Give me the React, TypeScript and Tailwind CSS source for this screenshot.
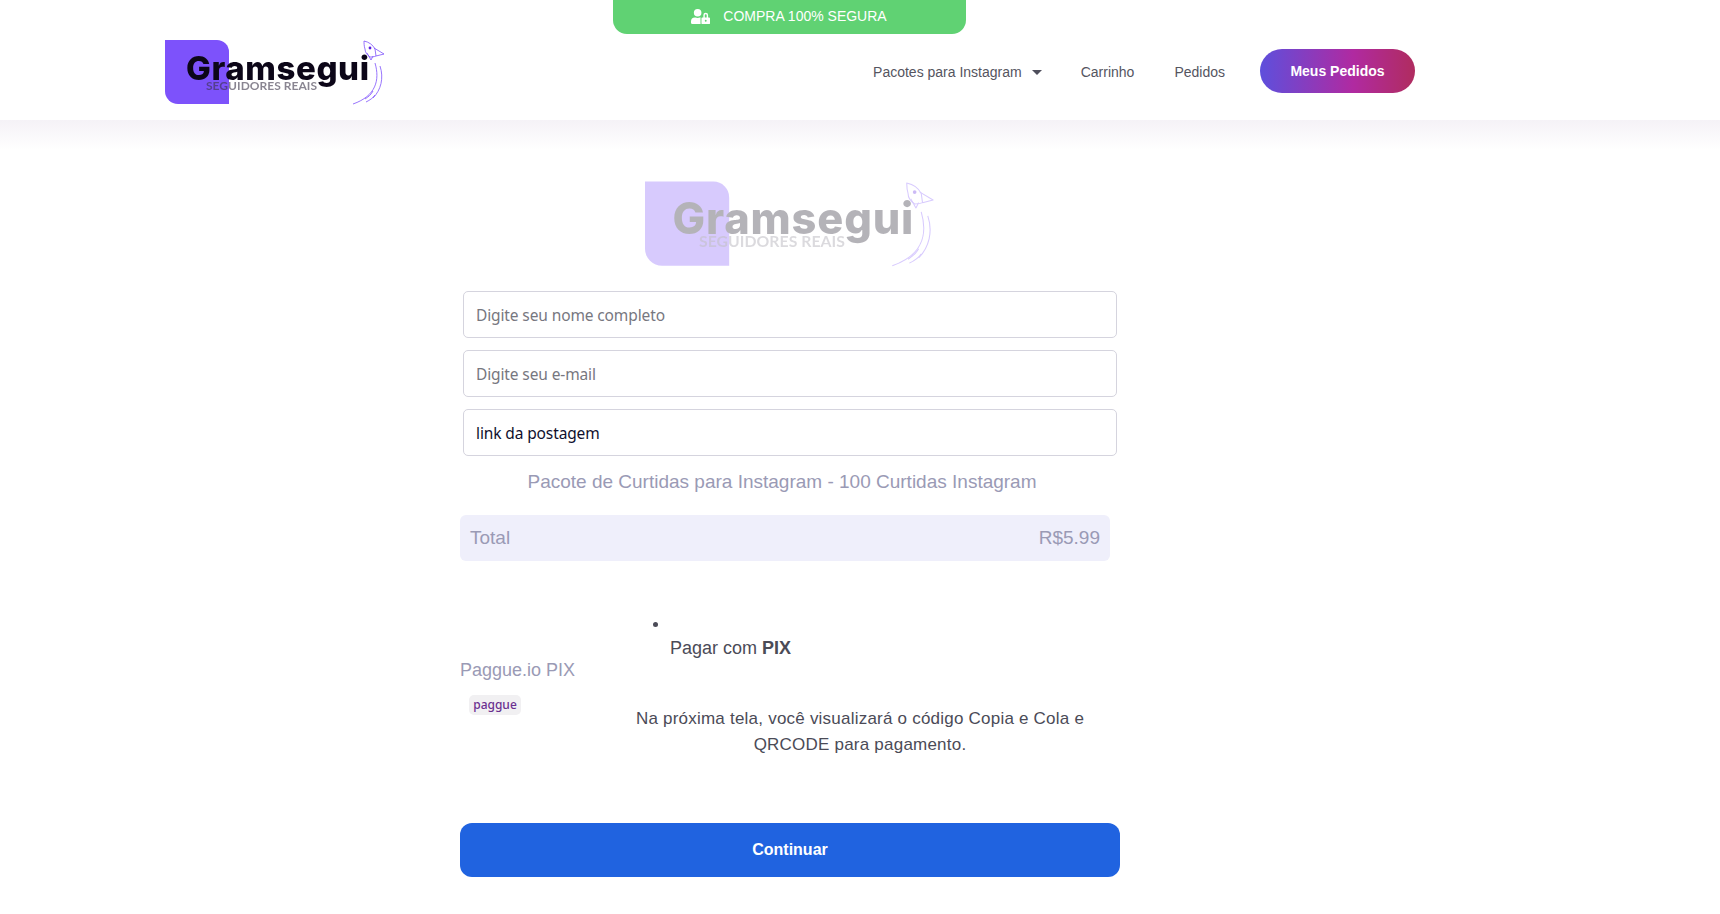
import { FaUserLock } from "react-icons/fa";

function Logo({ className }: { className: string }) {
  return (
    <svg viewBox="0 0 222 66" className={className} style={{ filter: "blur(0.4px)" }}>
      <path d="M0 0H52a12 12 0 0 1 12 12V64H13A13 13 0 0 1 0 51Z" fill="#7d52fb" />
      <text x="21" y="40" fontFamily="Inter, sans-serif" fontWeight="800" fontSize="33" fill="#0c0618" textLength="183" lengthAdjust="spacing">Gramsegui</text>
      <text x="41" y="49.5" fontFamily="Lato, sans-serif" fontWeight="700" fontSize="12" fill="#3b3347" fillOpacity="0.6" textLength="111" lengthAdjust="spacing">SEGUIDORES REAIS</text>
      <g fill="none" stroke="#7d52fb" strokeWidth="0.8" strokeLinejoin="round">
        <path d="M199 1c5 1 9 4 11 8l1 7c-2 1-5 1-6 1-3-2-5-5-5-8-1-3-1-6-1-8Z" />
        <path d="M209 8l10 6-8 2" />
        <path d="M202 13l4 7 2-4" />
        <path d="M210 23c5 17 1 33-22 41" />
        <path d="M215 26c4 12 1 24-7 32" />
        <path d="M208 51c-2 4-5 6-8 8" />
        <path d="M210 55c-2 3-5 5-9 7" />
      </g>
      <circle cx="205" cy="8" r="1.4" fill="#5a1fe0" />
    </svg>
  );
}

export default function App() {
  const sans = "font-['Liberation_Sans',Arial,sans-serif]";
  const field = "h-[47px] w-full rounded-[5px] border border-[#d5d4de] px-[12px] text-[15.5px] tracking-[-0.12px] text-[#10102e] outline-none placeholder:text-[#77777f]";
  return (
    <div className={`relative min-h-[914px] bg-white ${sans}`}>
      <div className="absolute left-[613px] top-0 z-10 flex h-[34px] w-[353px] items-center justify-center gap-[13px] rounded-b-[14px] bg-[#60d273] pb-[2px] pr-[1px] text-[14px] text-white">
        <FaUserLock className="text-[19px]" />
        <span>COMPRA 100% SEGURA</span>
      </div>

      <header className="flex h-[120px] items-center justify-between bg-white pl-[165px] pr-[305px] pt-[22px]">
        <Logo className="mt-[4px] h-[66px] w-[222px]" />
        <nav className="flex items-center text-[14px] text-[#55555f]">
          <a className="flex items-center pt-[2px]">
            Pacotes para Instagram
            <span className="ml-[10px] h-0 w-0 border-x-[5px] border-t-[5px] border-x-transparent border-t-[#4f4f5c]" />
          </a>
          <a className="ml-[39px] pt-[2px]">Carrinho</a>
          <a className="ml-[40px] pt-[2px]">Pedidos</a>
          <a className="ml-[35px] flex h-[44px] w-[155px] items-center justify-center rounded-full bg-[linear-gradient(90deg,#5e4fdc_0%,#b02aa1_60%,#b02c5f_100%)] text-[14px] font-bold text-white">
            Meus Pedidos
          </a>
        </nav>
      </header>

      <div className="h-[30px] bg-gradient-to-b from-[#f5f2f7] to-white" />

      <main className="ml-[460px] w-[660px]">
        <div className="flex justify-center pl-[2px] pt-[31px]">
          <Logo className="h-[88px] w-[292px] opacity-30" />
        </div>

        <div className="mx-[3px] mt-[22px] flex flex-col gap-[12px] font-['Noto_Sans',sans-serif]">
          <input placeholder="Digite seu nome completo" className={field} />
          <input placeholder="Digite seu e-mail" className={field} />
          <input defaultValue="link da postagem" className={field} />
        </div>

        <p className="mt-[12px] w-[644px] text-center text-[19px] leading-[28px] text-[#9a9ab5]">
          Pacote de Curtidas para Instagram - 100 Curtidas Instagram
        </p>

        <div className="mt-[19px] flex h-[46px] w-[650px] items-center justify-between rounded-[6px] bg-[#efeffb] px-[10px] text-[19px] text-[#9a9ab5]">
          <span>Total</span>
          <span>R$5.99</span>
        </div>

        <div className="mt-[49px] flex">
          <div className="w-[140px] pt-[46px]">
            <p className="text-[18px] leading-[28px] text-[#9a9ab5]">Paggue.io PIX</p>
            <div className="ml-[9px] mt-[11px] flex h-[20px] w-[52px] items-center justify-center rounded-[5px] bg-[#f1f0f2] font-['Noto_Sans',sans-serif] text-[12px] font-medium leading-none text-[#6a2f8f]">
              paggue
            </div>
          </div>
          <div className="w-[520px]">
            <ul className="ml-[70px] mt-[2px] list-disc text-[18px] text-[#4b4b57]">
              <li className="leading-[23px]">
                &nbsp;
                <p className="leading-[26px]">
                  Pagar com <b>PIX</b>
                </p>
              </li>
            </ul>
            <p className="mt-[45px] text-center text-[17px] leading-[26px] tracking-[0.22px] text-[#4b4b57]">
              Na próxima tela, você visualizará o código Copia e Cola e
              <br />
              QRCODE para pagamento.
            </p>
          </div>
        </div>

        <button className="mt-[65px] h-[54px] w-[660px] rounded-[12px] bg-[#2063e0] text-[16px] font-bold text-white">
          Continuar
        </button>
      </main>
    </div>
  );
}
